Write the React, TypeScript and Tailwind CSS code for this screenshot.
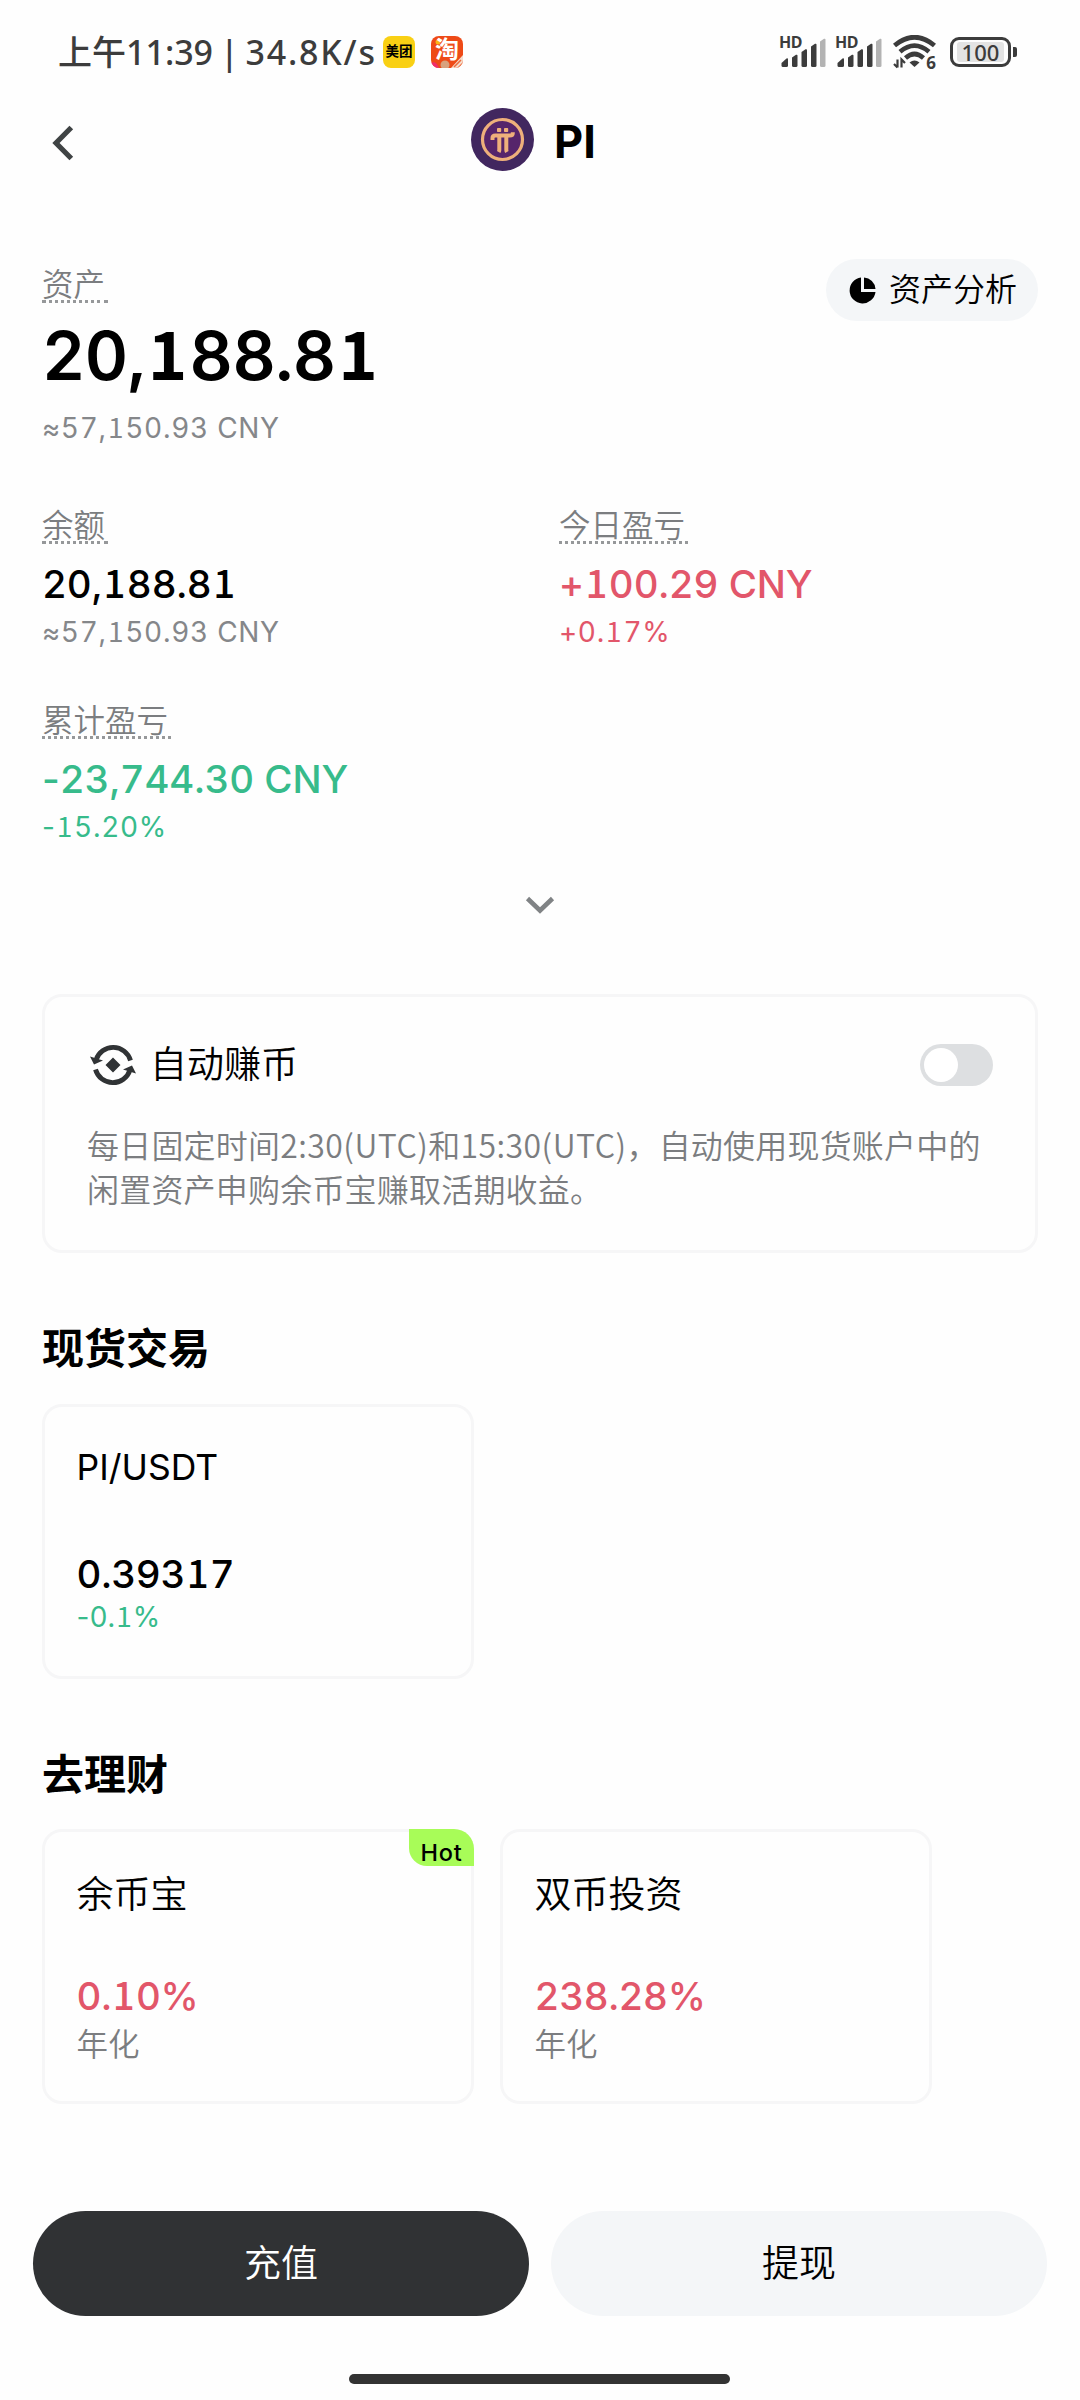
import React from "react";

interface MetricProps {
  label: string;
  value: string;
  sub: string;
  tone?: "up" | "down";
}

interface ProductCardProps {
  title: string;
  value: string;
  note: string;
  titleClass: string;
  valueClass: string;
  noteClass: string;
  hot?: boolean;
}

// Inter's "1" has no foot, so that digit comes from Noto and is padded to the tabular width.
// The minus sign keeps its own narrow width.
function Amount({ children }: { children: string }) {
  return (
    <>
      {children.split(/([1-])/).map((part, i) => {
        if (part === "1") {
          return (
            <span key={i} className="mx-[0.04em] leading-[0] font-['Noto_Sans_CJK_SC',sans-serif]">
              1
            </span>
          );
        }
        if (part === "-") {
          return (
            <span key={i} className="proportional-nums">
              -
            </span>
          );
        }
        return part;
      })}
    </>
  );
}

function SignalBars() {
  return (
    <div className="relative w-[47px] h-[32px]">
      <span className="absolute -left-px top-0 text-[16px] leading-[13px] font-bold tracking-[-0.5px]">HD</span>
      <svg className="absolute inset-0" width="47" height="32" viewBox="0 0 47 32" fill="#3c3c3c">
        <path d="M1.500 29.500v-2.500l5-4.500q1.500-.8 1.500.8v6.200q0 1.500-1.500 1.500h-3.500q-1.500 0-1.500-1.500z" />
        <path d="M12 21.500l4-2.700q1.500-.6 1.500.9v9.800q0 1.500-1.500 1.500h-2.500q-1.500 0-1.500-1.500z" />
        <path d="M21.500 16l4-2.700q1.500-.6 1.500.9v15.300q0 1.500-1.500 1.500h-2.500q-1.500 0-1.500-1.500z" />
        <path d="M31 10.500l4-2.700q1.500-.6 1.500.9v20.800q0 1.500-1.500 1.500h-2.500q-1.500 0-1.500-1.500z" />
        <path d="M40 5.500l4-2.700q1.500-.6 1.500.9v25.800q0 1.500-1.500 1.500h-2.500q-1.500 0-1.500-1.500z" fill="#b3b3b3" />
      </svg>
    </div>
  );
}

function WifiIcon() {
  return (
    <div className="relative w-[43px] h-[34px]">
      <svg width="43" height="34" viewBox="0 0 43 34" fill="none" stroke="#3c3c3c">
        <path d="M1.500 10.500Q21.500-6 41.500 10.500" strokeWidth="4.800" />
        <path d="M7 16.800Q21.500 4.500 36 16.800" strokeWidth="4.600" />
        <path d="M12.500 23Q21.500 15 30.500 23" strokeWidth="4.600" />
        <path d="M16.500 27.500Q21.500 23.500 26.500 27.500L21.500 32z" fill="#3c3c3c" stroke="none" />
        <path d="M4.500 24.500v8M1 29l3.500 3.500M8.500 32.500v-8L12 28" strokeWidth="2.200" />
      </svg>
      <span className="absolute right-0 bottom-0 text-[17px] leading-[13px] font-bold">6</span>
    </div>
  );
}

function StatusBar() {
  return (
    <div className="flex h-[104px] items-center justify-between pl-[58px] pr-[63px] text-[#3c3c3c] font-['Noto_Sans','Noto_Sans_CJK_SC',sans-serif]">
      <div className="flex items-center">
        <span className="w-[325px] text-[34px] leading-[40px] font-medium whitespace-nowrap [word-spacing:-2px]">
          上午11:39 | <span className="tracking-[1.8px]">34.8K/s</span>
        </span>
        <span className="flex size-8 items-center justify-center rounded-[8px] bg-[#f9d014] text-[13.5px] leading-none font-bold text-black">
          美团
        </span>
        <span className="relative ml-4 flex size-8 items-center justify-center">
          <svg className="absolute inset-0 rounded-[8px] bg-[#ee4a17]" width="32" height="32" viewBox="0 0 32 32">
            <circle cx="7" cy="6" r="2.500" fill="#fbb615" />
            <path d="M0 27q5-3 8 5H0z" fill="#ef2d6a" />
            <circle cx="14" cy="29" r="4.500" fill="#d8a27e" />
            <path d="M20 32l12-13v13z" fill="#f6dccb" />
            <path d="M23 31l7-7M27 32l5-5" stroke="#ec6a3c" strokeWidth="1.500" />
          </svg>
          <span className="relative -top-[3px] text-[24px] leading-[32px] font-bold text-white">淘</span>
        </span>
      </div>
      <div className="flex items-center">
        <SignalBars />
        <div className="ml-[9px]">
          <SignalBars />
        </div>
        <div className="ml-[10px]">
          <WifiIcon />
        </div>
        <div className="ml-[14px] flex h-[30px] w-[61px] items-center justify-center rounded-[9px] border-[3px] border-[#3c3c3c]">
          <span className="flex h-5 w-[47px] items-center justify-center rounded-[3px] bg-[#e3e3e3] text-[22px] leading-none font-medium">
            100
          </span>
        </div>
        <div className="ml-[2px] h-[10px] w-[4px] rounded-r-[2px] bg-[#3c3c3c]" />
      </div>
    </div>
  );
}

function PiLogo() {
  return (
    <svg width="63" height="63" viewBox="0 0 63 63">
      <circle cx="31.500" cy="31.500" r="31.500" fill="#41275f" />
      <circle cx="31.500" cy="31.500" r="20" fill="#56256b" stroke="#eeb07b" strokeWidth="3.200" />
      <g fill="#eeb07b">
        <rect x="26" y="20" width="4.200" height="4" rx=".8" />
        <rect x="33" y="20" width="4.200" height="4" rx=".8" />
      </g>
      <path d="M21.500 32v-2q0-2.500 2.800-2.500h14.500q3 0 3-2.500v-.8M28.300 28v14q0 1-.6 2M35.300 28v14q0 1 .6 2" fill="none" stroke="#eeb07b" strokeWidth="4" />
    </svg>
  );
}

function Header() {
  return (
    <div className="flex h-[75px] items-center">
      <svg className="ml-[52px] mt-[2px]" width="22" height="36" viewBox="0 0 22 36">
        <path d="M19.300 2.500L4 18L19.300 33.500" fill="none" stroke="#3f4344" strokeWidth="5.200" />
      </svg>
      <div className="ml-[397px] -mt-[5px]">
        <PiLogo />
      </div>
      <h1 className="ml-[20px] -mt-px text-[45px] leading-none font-bold">PI</h1>
    </div>
  );
}

function DottedLabel({ children }: { children: React.ReactNode }) {
  return (
    <div className="h-[35px] w-fit border-b-[3px] border-dotted border-[#96989a] pr-[3px] text-[31.5px] leading-[34px] font-[350] whitespace-nowrap text-[#7b7d80]">
      {children}
    </div>
  );
}

function Metric({ label, value, sub, tone }: MetricProps) {
  const valueColor = tone === "up" ? "text-[#e2566a]" : tone === "down" ? "text-[#37bb8b]" : "text-black";
  const subColor = tone ? valueColor : "text-[#85878a]";

  return (
    <div>
      <DottedLabel>{label}</DottedLabel>
      <div className={`mt-5 text-[38.5px] leading-[40px] font-medium tracking-[-0.1px] tabular-nums whitespace-nowrap ${valueColor}`}>
        <Amount>{value}</Amount>
      </div>
      <div className={`mt-[13px] text-[28px] leading-[30px] tracking-[0.7px] tabular-nums whitespace-nowrap ${subColor}`}>
        <Amount>{sub}</Amount>
      </div>
    </div>
  );
}

function AutoEarnCard() {
  return (
    <div className="h-[259px] rounded-[20px] border-[3px] border-[#f6f6f7] px-[42px] pt-[47px]">
      <div className="flex h-[42px] items-center">
        <svg className="ml-[2px]" width="48" height="42" viewBox="0 0 48 42">
          <g fill="none" stroke="#303335" strokeWidth="4.800">
            <path d="M7 16A18 18 0 0 1 41.500 16.500" />
            <path d="M41 26A18 18 0 0 1 6.500 25.500" />
          </g>
          <path d="M1 12.500L14 16.500L5 20.500zM47 29.500L34 25.500L43 21.500zM24 13.500L31.500 21L24 28.500L16.500 21z" fill="#303335" />
        </svg>
        <span className="ml-[13px] text-[37px] leading-[44px] font-[350]">自动赚币</span>
        <div className="ml-auto flex h-[42px] w-[73px] items-center rounded-full bg-[#dddfe1] pl-1">
          <div className="size-[34px] rounded-full bg-white" />
        </div>
      </div>
      <p className="mt-[36px] text-[32px] leading-[44px] font-[350] tracking-[0.2px] whitespace-nowrap text-[#7b7d80] font-['Noto_Sans_CJK_SC',sans-serif]">
        每日固定时间<span className="tracking-[0.46px]">2:30(UTC)</span>和
        <span className="tracking-[0.46px]">15:30(UTC)</span>，自动使用现货账户中的
        <br />
        闲置资产申购余币宝赚取活期收益。
      </p>
    </div>
  );
}

function ProductCard({ title, value, note, titleClass, valueClass, noteClass, hot }: ProductCardProps) {
  return (
    <div className="relative h-[275px] w-[432px] rounded-[20px] border-[3px] border-[#f6f6f7] pl-[31.5px] pt-[42px]">
      <div className={titleClass}>{title}</div>
      <div className={`text-[38.5px] leading-[44px] font-medium tracking-[-0.3px] tabular-nums ${valueClass}`}>
        <Amount>{value}</Amount>
      </div>
      <div className={`leading-[34px] tabular-nums ${noteClass}`}>
        <Amount>{note}</Amount>
      </div>
      {hot && (
        <div className="absolute -top-[3px] -right-[3px] flex h-[37px] w-[65px] items-center justify-center rounded-tr-[20px] rounded-bl-[18px] bg-[#a8fc58] pt-[10px] text-[23.5px] leading-none font-medium tracking-[0.8px]">
          Hot
        </div>
      )}
    </div>
  );
}

const earnCardClasses = {
  titleClass: "text-[37px] leading-[42px] font-[350]",
  valueClass: "mt-[58px] text-[#e2566a]",
  noteClass: "mt-[10px] text-[31.5px] font-[350] text-[#7b7d80]",
};

export default function App() {
  return (
    <div className="flex h-[2400px] w-[1080px] flex-col bg-[#fefefe] text-black font-['Inter','Noto_Sans_CJK_SC',sans-serif]">
      <StatusBar />
      <Header />

      <main className="px-[42px]">
        <div className="mt-[80px] flex h-[184px] justify-between">
          <div className="pt-[9px]">
            <DottedLabel>资产</DottedLabel>
            <div className="mt-[23px] text-[67px] leading-[60px] font-semibold tracking-[-0.5px] tabular-nums">
              <Amount>20,188.81</Amount>
            </div>
            <div className="mt-[27px] text-[28px] leading-[30px] tracking-[0.7px] tabular-nums text-[#85878a]">
              <Amount>≈57,150.93 CNY</Amount>
            </div>
          </div>
          <button className="flex h-[62px] w-[212px] items-center rounded-full bg-[#f4f6f8] pl-[23px]">
            <svg width="27" height="27" viewBox="0 0 27 27">
              <path d="M12 .5V15H26.500A13 13 0 1 1 12 .5z" />
              <path d="M15 .5A12.500 12.500 0 0 1 26.500 12H15z" />
            </svg>
            <span className="ml-[13px] text-[32px] leading-[34px] font-[350] whitespace-nowrap">资产分析</span>
          </button>
        </div>

        <div className="mt-[66px] grid grid-cols-[517px_1fr] gap-y-[57px]">
          <Metric label="余额" value="20,188.81" sub="≈57,150.93 CNY" />
          <Metric label="今日盈亏" value="+100.29 CNY" sub="+0.17%" tone="up" />
          <Metric label="累计盈亏" value="-23,744.30 CNY" sub="-15.20%" tone="down" />
        </div>

        <svg className="mx-auto mt-[54px] block" width="30" height="18" viewBox="0 0 30 18">
          <path d="M2.500 2.500L15 14.500L27.500 2.500" fill="none" stroke="#808385" strokeWidth="4.600" />
        </svg>

        <div className="mt-[80px]">
          <AutoEarnCard />
        </div>

        <h2 className="mt-[71px] text-[42px] leading-[50px] font-bold">现货交易</h2>
        <div className="mt-[30px]">
          <ProductCard
            title="PI/USDT"
            value="0.39317"
            note="-0.1%"
            titleClass="text-[35.5px] leading-[37px]"
            valueClass="mt-[66px] text-black"
            noteClass="mt-[4px] text-[28px] text-[#37bb8b]"
          />
        </div>

        <h2 className="mt-[71px] text-[42px] leading-[50px] font-bold">去理财</h2>
        <div className="mt-[29px] flex gap-[26px]">
          <ProductCard title="余币宝" value="0.10%" note="年化" {...earnCardClasses} hot />
          <ProductCard title="双币投资" value="238.28%" note="年化" {...earnCardClasses} />
        </div>
      </main>

      <div className="mt-[107px] flex gap-[22px] px-[33px] text-[37px] font-[350]">
        <button className="h-[105px] flex-1 rounded-full bg-[#303234] text-white">充值</button>
        <button className="h-[105px] flex-1 rounded-full bg-[#f4f6f8]">提现</button>
      </div>
      <div className="ml-[349px] mt-[58px] h-[10px] w-[381px] rounded-full bg-[#333333]" />
    </div>
  );
}
